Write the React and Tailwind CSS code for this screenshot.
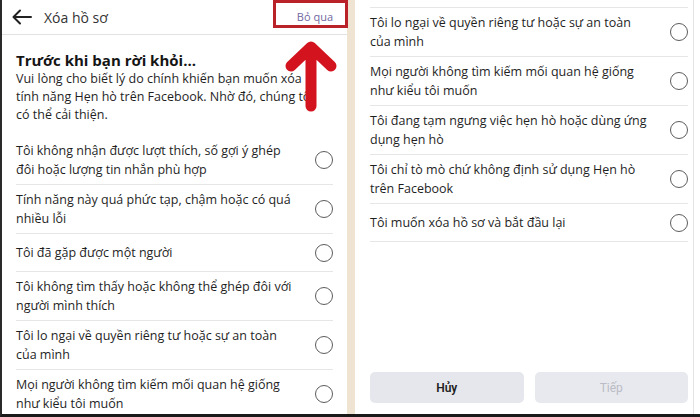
import React from 'react';

const LEFT_ITEMS = [
  ['Tôi không nhận được lượt thích, số gợi ý ghép', 'đôi hoặc lượng tin nhắn phù hợp'],
  ['Tính năng này quá phức tạp, chậm hoặc có quá', 'nhiều lỗi'],
  ['Tôi đã gặp được một người'],
  ['Tôi không tìm thấy hoặc không thể ghép đôi với', 'người mình thích'],
  ['Tôi lo ngại về quyền riêng tư hoặc sự an toàn', 'của mình'],
  ['Mọi người không tìm kiếm mối quan hệ giống', 'như kiểu tôi muốn'],
];

const RIGHT_ITEMS = [
  ['Tôi lo ngại về quyền riêng tư hoặc sự an toàn', 'của mình'],
  ['Mọi người không tìm kiếm mối quan hệ giống', 'như kiểu tôi muốn'],
  ['Tôi đang tạm ngưng việc hẹn hò hoặc dùng ứng', 'dụng hẹn hò'],
  ['Tôi chỉ tò mò chứ không định sử dụng Hẹn hò', 'trên Facebook'],
  ['Tôi muốn xóa hồ sơ và bắt đầu lại'],
];

const font = { fontFamily: '"Open Sans", "Noto Sans", sans-serif' };

function Radio() {
  return <span className="w-[18px] h-[18px] shrink-0 rounded-full border-[1.5px] border-[#5c5c5c]" />;
}

function Item({ lines }) {
  return (
    <div className="flex items-center justify-between min-h-[38px] py-[5px] border-b border-[#e6e6e6]">
      <p className="text-[12.5px] leading-[19px] text-[#1f1f1f]">
        {lines.map((l, i) => (
          <React.Fragment key={i}>
            {i > 0 && <br />}
            {l}
          </React.Fragment>
        ))}
      </p>
      <Radio />
    </div>
  );
}

export default function App() {
  return (
    <div style={font} className="relative flex w-[700px] h-[417px] bg-white border-l-2 border-[#2a2a2a] border-b-[3px] border-b-[#1a1a1a] overflow-hidden">
      {/* left screen */}
      <div className="w-[345px] shrink-0 flex flex-col">
        <div className="h-[35px] shrink-0 flex items-center gap-[12px] pl-[10px] border-b border-[#e2e2e2]">
          <svg width="20" height="16" viewBox="0 0 20 16" fill="none" stroke="#222" strokeWidth="2" strokeLinecap="round" strokeLinejoin="round">
            <path d="M19 8H2M8 1.5L1.5 8 8 14.5" />
          </svg>
          <span className="text-[14px] text-[#333]">Xóa hồ sơ</span>
          <span className="ml-auto mr-[14px] text-[11px] text-[#72679f]">Bỏ qua</span>
        </div>
        <div className="px-[14px] pt-[15px]">
          <h1 className="text-[15px] leading-[20px] font-bold text-[#151515]">Trước khi bạn rời khỏi...</h1>
          <p className="text-[12.5px] leading-[18px] text-[#1f1f1f] whitespace-nowrap">
            Vui lòng cho biết lý do chính khiến bạn muốn xóa<br />
            tính năng Hẹn hò trên Facebook. Nhờ đó, chúng tôi<br />
            có thể cải thiện.
          </p>
        </div>
        <div className="px-[14px] mt-[12px]">
          {LEFT_ITEMS.map((lines, i) => (
            <Item key={i} lines={lines} />
          ))}
        </div>
      </div>

      {/* divider */}
      <div className="w-[8px] shrink-0 bg-[#efe3d1]" />

      {/* right screen */}
      <div className="w-[339px] shrink-0 flex flex-col border-r border-[#e4e4e4] pl-[15px] pr-[5px]">
        <div className="h-[8px] shrink-0 border-b border-[#e6e6e6]" />
        {RIGHT_ITEMS.map((lines, i) => (
          <Item key={i} lines={lines} />
        ))}
        <div className="mt-auto mb-[11px] flex gap-[11px]">
          <button className="flex-1 h-[31px] rounded-[5px] bg-[#e5e7ec] text-[12px] font-semibold text-[#222]" style={{ fontFamily: 'Roboto, sans-serif' }}>Hủy</button>
          <button className="flex-1 h-[31px] rounded-[5px] bg-[#e8e9ee] text-[12px] text-[#b9bcc4]" style={{ fontFamily: 'Roboto, sans-serif' }}>Tiếp</button>
        </div>
      </div>

      {/* highlight overlay */}
      <div className="absolute left-[271px] top-0 w-[75px] h-[28px] border-[3px] border-[#b82228]" />
      <svg className="absolute left-[280px] top-[35px]" width="60" height="82" viewBox="0 0 60 82" fill="none" stroke="#d3141f" strokeWidth="11" strokeLinecap="round" strokeLinejoin="round">
        <path d="M29 13V71M9 31L29 12 49 31" />
      </svg>
    </div>
  );
}
